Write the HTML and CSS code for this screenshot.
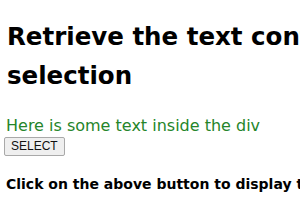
FILE: index.html
```html
<!DOCTYPE html>
<html lang="en">
<head>
  <meta charset="UTF-8" />
  <title>Retrieve the text content of selection</title>
  <link rel="stylesheet" href="styles.css">
</head>
<body>
  <h1>Retrieve the text content of a selection</h1>
  <div class="content" id="content">Here is some text inside the div</div>
  <button class="select-btn" type="button">SELECT</button>
  <p class="note">Click on the above button to display the selected text</p>
</body>
</html>
```
FILE: styles.css
```css
body {
  margin: 0;
  padding: 0 6px;
  font-family: 'DejaVu Sans', sans-serif;
  white-space: nowrap;
  overflow: hidden;
}

h1 {
  font-size: 24.5px;
  font-weight: 700;
  line-height: 39px;
  margin: 17px 0 21px 1px;
  white-space: normal;
  width: 470px;
}

.content {
  color: #25852a;
  font-size: 16px;
  line-height: 19px;
}

.select-btn {
  font-family: 'Liberation Sans', Arial, sans-serif;
  font-size: 12px;
  color: #111;
  background: #efefef;
  border: 1px solid #a9a9a9;
  border-radius: 2px;
  padding: 1px 6px;
  margin: 1px 0 0 -2px;
  height: 19px;
}

.note {
  font-weight: 700;
  font-size: 14px;
  margin: 20px 0;
}
```
